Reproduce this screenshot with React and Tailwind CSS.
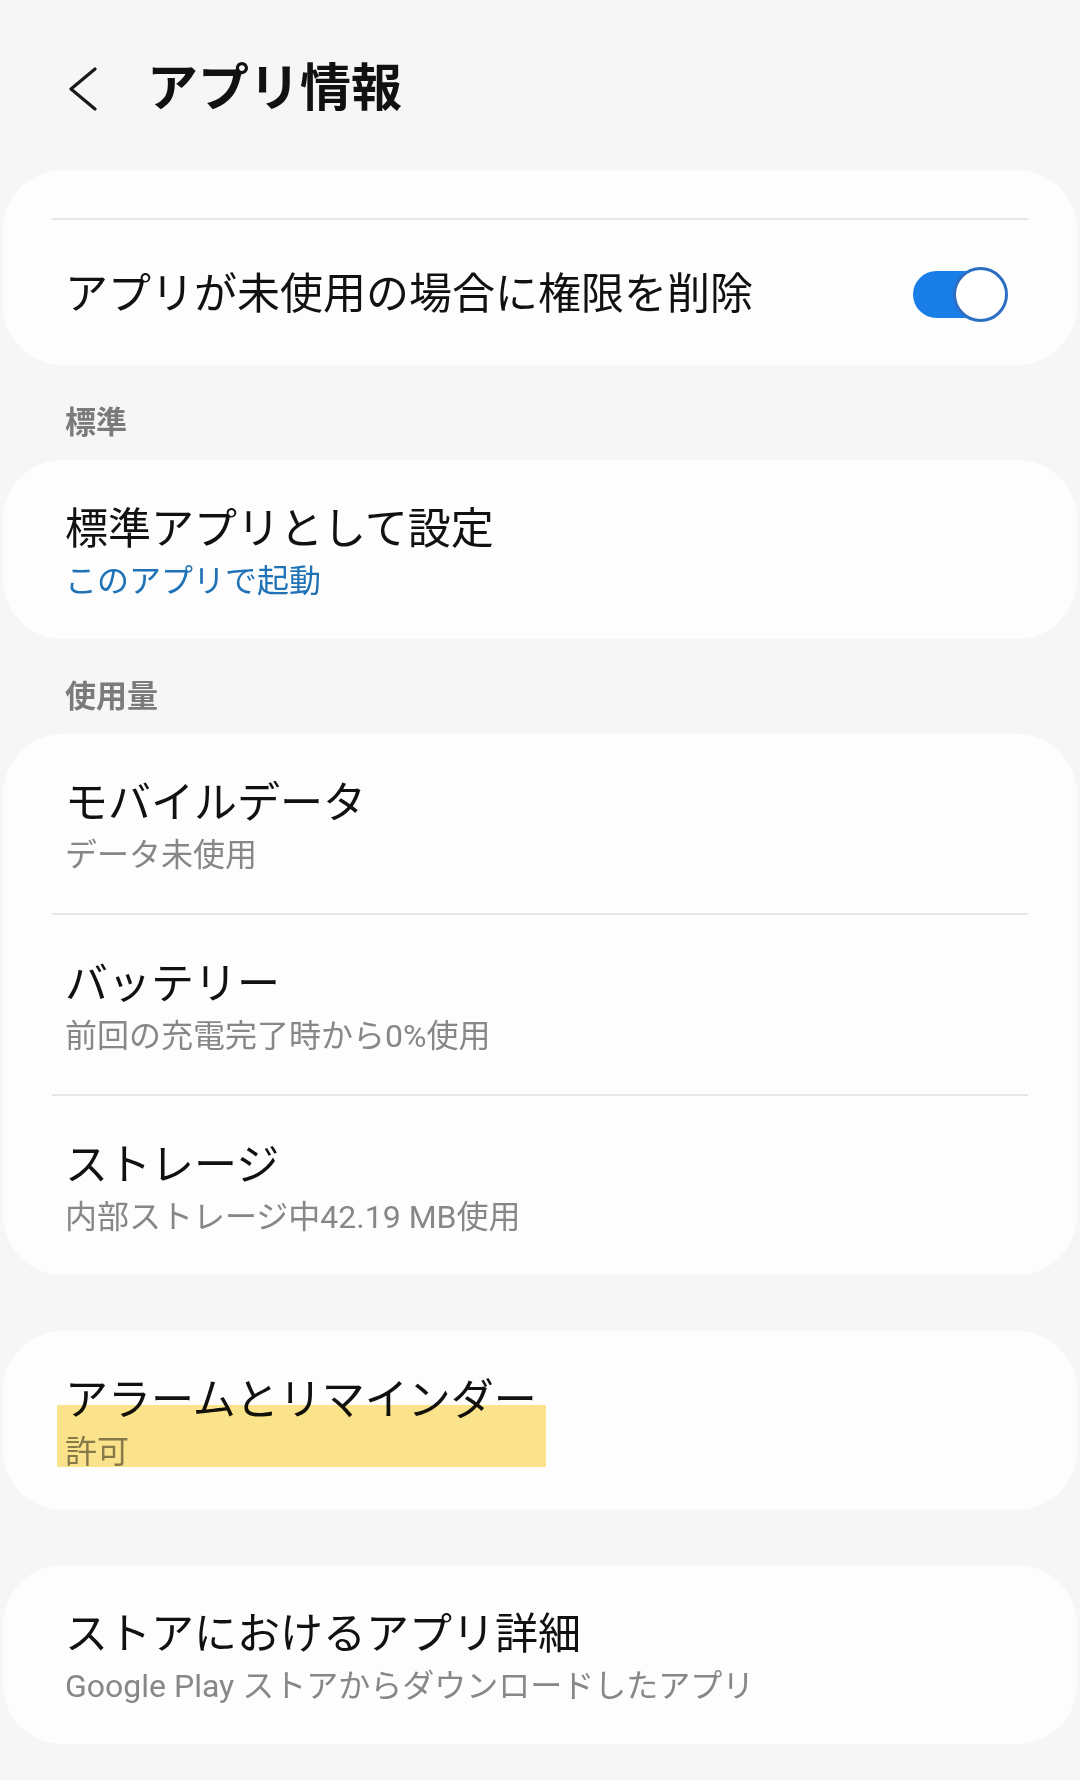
function Divider() {
  return <div className="mx-[49px] h-[2px] bg-[#e6e6e6]" />;
}

function Row({ title, sub, subClass = "text-[#878787]" }) {
  return (
    <div className="h-[179px] pl-[62px] pr-[60px] pt-[44px]">
      <div className="text-[43px] leading-[50px] text-[#111]">{title}</div>
      {sub && <div className={`mt-[5px] text-[32px] leading-[44px] ${subClass}`}>{sub}</div>}
    </div>
  );
}

function Card({ children, className = "" }) {
  return <div className={`relative mx-[3px] overflow-hidden rounded-[60px] bg-[#fdfdfd] ${className}`}>{children}</div>;
}

function SectionLabel({ children }) {
  return (
    <div className="pl-[65px] pt-[40px] pb-[19px] text-[31px] font-bold leading-[36px] text-[#7b7b7b]">{children}</div>
  );
}

function Toggle() {
  return (
    <div className="relative h-[55px] w-[95px] shrink-0">
      <span className="absolute left-0 top-[4px] h-[47px] w-[78px] rounded-full bg-[#1a7ee8]" />
      <span className="absolute right-0 top-0 h-[55px] w-[55px] rounded-full border-[3px] border-[#2b6fc2] bg-white" />
    </div>
  );
}

export default function App() {
  return (
    <div className="min-h-[1780px] w-[1080px] bg-[#f6f6f6] font-['Roboto','Noto_Sans_CJK_JP',sans-serif]">
      <header className="flex h-[170px] items-start pl-[68px] pt-[59px]">
        <div className="flex h-[60px] items-center gap-[49px]">
          <svg width="30" height="44" viewBox="0 0 30 44" fill="none" stroke="#1a1a1a" strokeWidth="3.2" strokeLinecap="round" strokeLinejoin="round">
            <path d="M27 2 3 22l24 20" />
          </svg>
          <h1 className="text-[51px] font-bold leading-[60px] text-[#111]">アプリ情報</h1>
        </div>
      </header>

      <Card>
        <div className="h-[48px]" />
        <Divider />
        <div className="flex h-[145px] items-center justify-between pl-[62px] pr-[69px] pt-[3px]">
          <span className="text-[43px] leading-[50px] text-[#111]">アプリが未使用の場合に権限を削除</span>
          <Toggle />
        </div>
      </Card>

      <SectionLabel>標準</SectionLabel>
      <Card>
        <Row title="標準アプリとして設定" sub="このアプリで起動" subClass="text-[#1f72b6]" />
      </Card>

      <SectionLabel>使用量</SectionLabel>
      <Card>
        <Row title="モバイルデータ" sub="データ未使用" />
        <Divider />
        <Row title="バッテリー" sub="前回の充電完了時から0%使用" />
        <Divider />
        <Row title="ストレージ" sub="内部ストレージ中42.19 MB使用" />
      </Card>

      <div className="h-[56px]" />
      <Card>
        <Row title="アラームとリマインダー" sub="許可" />
        <span className="absolute left-[54px] top-[74px] h-[62px] w-[489px] bg-[#fde58c] mix-blend-multiply" />
      </Card>

      <div className="h-[55px]" />
      <Card>
        <Row title="ストアにおけるアプリ詳細" sub="Google Play ストアからダウンロードしたアプリ" />
      </Card>
    </div>
  );
}
